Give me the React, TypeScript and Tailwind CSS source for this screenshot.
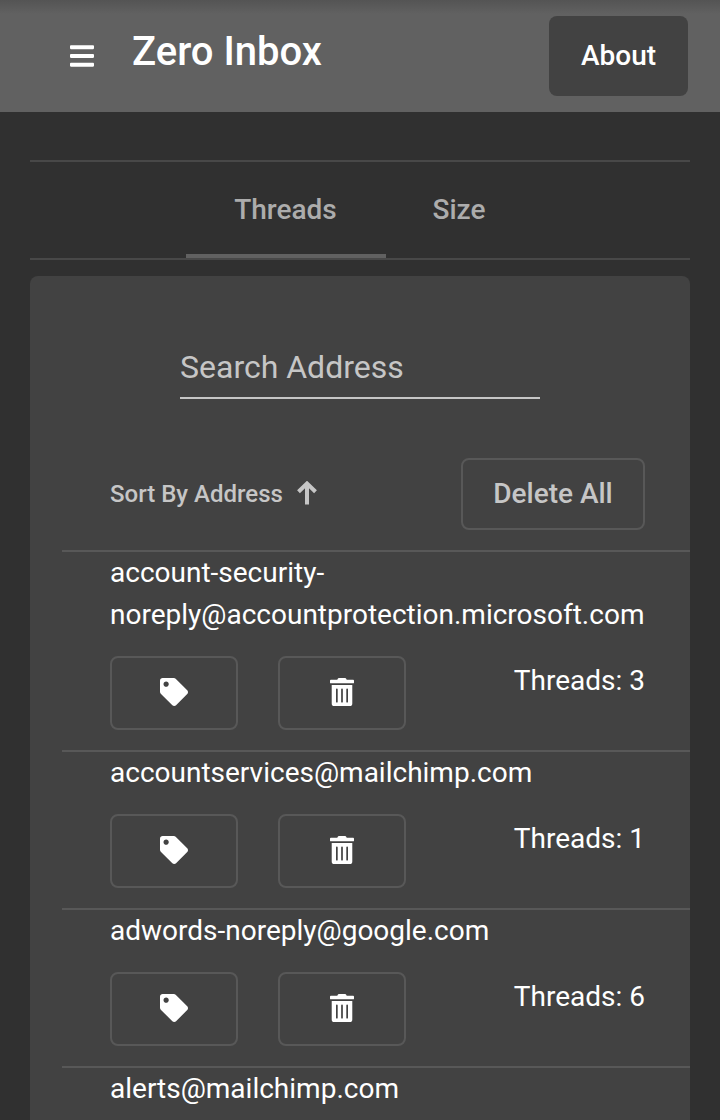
import { FaBars, FaTag, FaTrashAlt } from "react-icons/fa";

interface Sender {
  lines: string[];
  threads?: number;
}

const senders: Sender[] = [
  { lines: ["account-security-", "noreply@accountprotection.microsoft.com"], threads: 3 },
  { lines: ["accountservices@mailchimp.com"], threads: 1 },
  { lines: ["adwords-noreply@google.com"], threads: 6 },
  { lines: ["alerts@mailchimp.com"] },
];

const iconButton =
  "flex h-[74px] w-32 items-center justify-center rounded-lg border-2 border-[#585858] pb-[2px] text-white";

function SenderRow({ lines, threads }: Sender) {
  return (
    <li className="ml-8 border-t-2 border-[#585858] pr-[45px] pl-12">
      <div className="whitespace-nowrap">
        {lines.map((line) => (
          <div key={line} className="h-[42px] text-[28px] leading-[42px]">
            {line}
          </div>
        ))}
      </div>
      {threads !== undefined && (
        <div className="flex items-start py-5">
          <button className={iconButton} aria-label="Label">
            <FaTag className="size-7" />
          </button>
          <button className={`${iconButton} ml-10`} aria-label="Delete">
            <FaTrashAlt className="h-7 w-6" preserveAspectRatio="none" />
          </button>
          <span className="mt-1 ml-auto text-[28px] leading-[42px]">Threads: {threads}</span>
        </div>
      )}
    </li>
  );
}

export default function App() {
  return (
    <div className="flex h-[1120px] w-[720px] flex-col overflow-hidden bg-[#303030] font-['Roboto',sans-serif] text-white">
      <header className="flex h-28 shrink-0 items-center bg-[#616161] bg-linear-to-b from-[#545454] to-[#616161] to-[14px] pr-8 pl-[70px]">
        <FaBars className="h-7 w-6" preserveAspectRatio="none" />
        <h1 className="-mt-2 ml-[38px] text-[40px] leading-[64px] font-medium">Zero Inbox</h1>
        <button className="ml-auto h-20 w-[139px] rounded-lg bg-[#424242] text-[28px] font-medium">
          About
        </button>
      </header>

      <nav className="mx-[30px] mt-12 flex h-[100px] shrink-0 justify-center border-y-2 border-[#484848] text-[28px] font-medium text-[#acacac]">
        <button className="h-24 w-[200px] border-b-4 border-[#616161] pt-1 pr-px">Threads</button>
        <button className="h-24 w-[148px] pr-[2px]">Size</button>
      </nav>

      <main className="mx-[30px] mt-4 min-h-0 flex-1 rounded-t-lg bg-[#424242]">
        <div className="mt-[68px] ml-[150px] flex h-[55px] w-[360px] items-center border-b-2 border-[#c6c6c6] pb-2 text-[32px] text-[#c6c6c6]">
          Search Address
        </div>
        <div className="mt-[59px] mb-5 flex h-[72px] items-center pr-[45px] pl-20 text-[#c6c6c6]">
          <span className="text-[24px] font-medium">Sort By Address</span>
          <svg className="mb-[3px] ml-[14px] h-6 w-5" viewBox="0 0 20 24" fill="none" stroke="currentColor">
            <path d="M10 3V23.5" strokeWidth="4" />
            <path d="M1.5 10.8L10 2.5L18.5 10.8" strokeWidth="4" />
          </svg>
          <button className="ml-auto h-[72px] w-[184px] rounded-lg border-2 border-[#585858] text-[28px] font-medium">
            Delete All
          </button>
        </div>
        <ul>
          {senders.map((sender) => (
            <SenderRow key={sender.lines[0]} {...sender} />
          ))}
        </ul>
      </main>
    </div>
  );
}
